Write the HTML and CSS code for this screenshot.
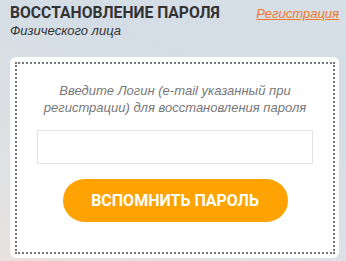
FILE: index.html
```html
<!DOCTYPE html>
<html lang="ru">
<head>
    <meta charset="UTF-8">
    <meta name="viewport" content="width=device-width, initial-scale=1.0">
    <title>Восстановление пароля</title>
    <link rel="stylesheet" href="styles.css">
</head>
<body>
    <div class="page">
        <header class="head">
            <div class="head-titles">
                <h1>Восстановление пароля</h1>
                <p class="subtitle">Физического лица</p>
            </div>
            <a class="reg-link" href="#register">Регистрация</a>
        </header>
        <div class="card">
            <form class="card-inner">
                <p class="hint">Введите Логин (e-mail указанный при регистрации) для восстановления пароля</p>
                <input class="login-input" type="text" name="login">
                <button class="btn" type="button">Вспомнить пароль</button>
            </form>
        </div>
    </div>
</body>
</html>
```

FILE: styles.css
```css
body {
    margin: 0;
    padding: 0;
    font-family: 'Liberation Sans', Arial, sans-serif;
    background: linear-gradient(20deg, #e9e2de 0%, #dde1e5 30%, #d4dde5 70%, #d6dee6 100%);
    min-height: 261px;
}
.page {
    padding: 3px 7px 0 10px;
}
.head {
    display: flex;
    justify-content: space-between;
    align-items: flex-start;
    height: 54px;
}
.head h1 {
    margin: 0;
    font-family: Roboto, sans-serif;
    font-size: 15.7px;
    font-weight: 700;
    line-height: 19px;
    text-transform: uppercase;
    color: #333333;
}
.subtitle {
    margin: 1px 0 0;
    font-size: 13px;
    font-style: italic;
    color: #333333;
}
.reg-link {
    margin-top: 3px;
    font-size: 13px;
    font-style: italic;
    color: #f0782a;
    text-decoration: underline;
}
.card {
    background: #ffffff;
    border-radius: 6px;
    padding: 5px 4px 4px 5px;
}
.card-inner {
    border: 2px dotted #777777;
    display: flex;
    flex-direction: column;
    align-items: center;
    padding: 18px 0 30px;
    margin: 0;
}
.hint {
    margin: 0 0 14px;
    width: 280px;
    text-align: center;
    font-size: 13px;
    font-style: italic;
    line-height: 17px;
    color: #777777;
}
.login-input {
    box-sizing: border-box;
    width: 276px;
    height: 34px;
    border: 1px solid #e3e3e3;
    margin: 0 0 15px;
    background: #ffffff;
}
.btn {
    width: 225px;
    height: 43px;
    border: 0;
    border-radius: 22px;
    background: #ffa302;
    color: #ffffff;
    font-family: Roboto, sans-serif;
    font-size: 16px;
    font-weight: 700;
    text-transform: uppercase;
    cursor: pointer;
}
```
